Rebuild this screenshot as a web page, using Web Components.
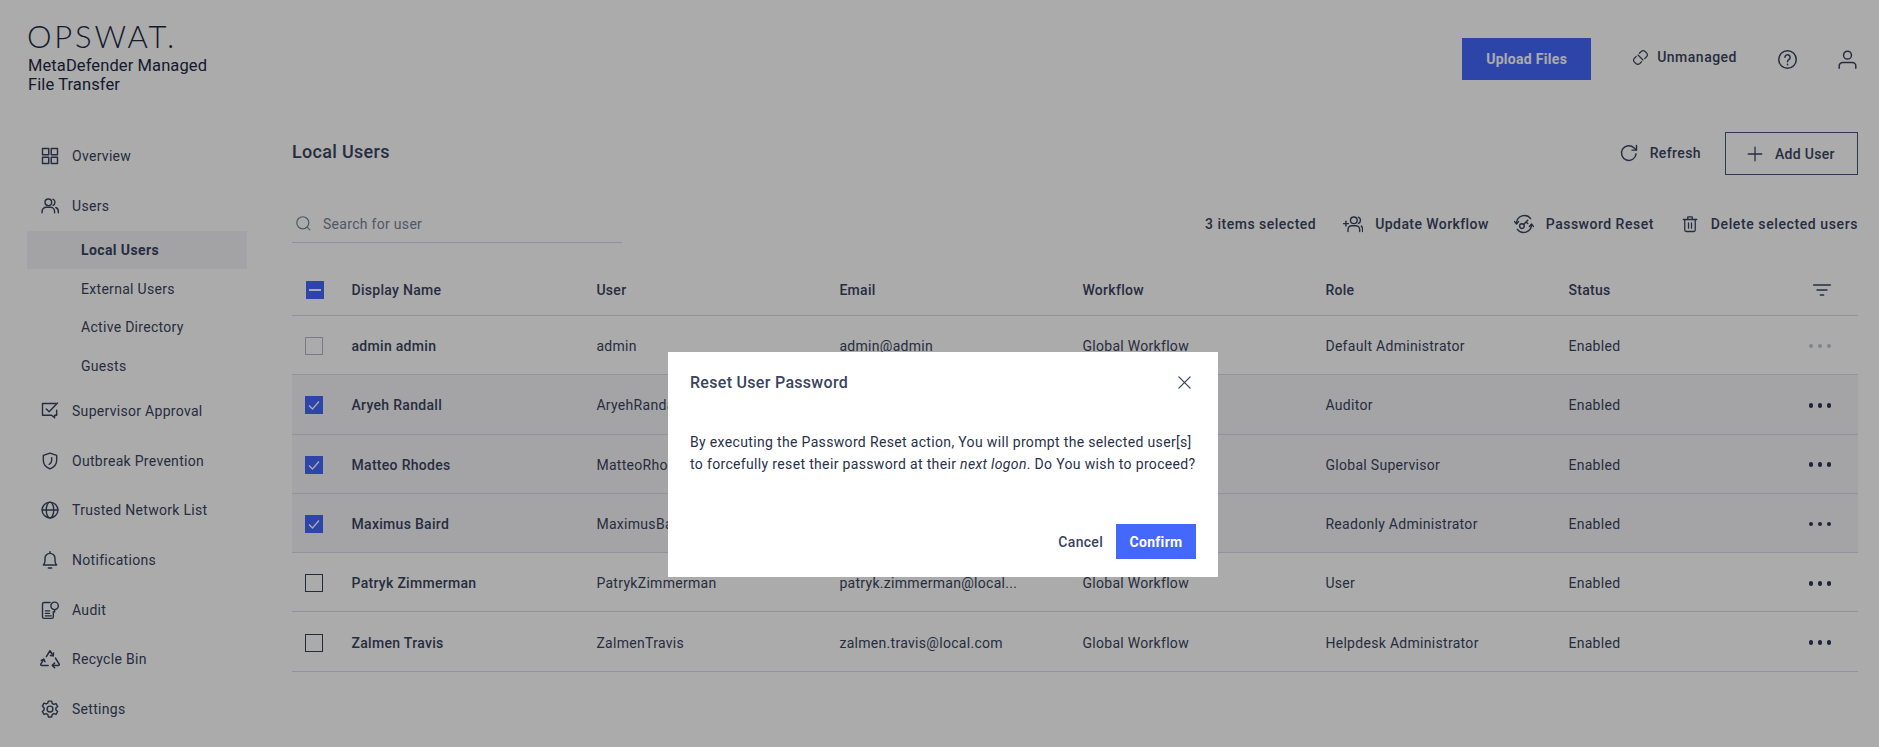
<!DOCTYPE html>
<html>
<head>
<meta charset="utf-8">
<title>Local Users</title>
<style>
  html, body { margin: 0; height: 100%; }
  body {
    background: #fff;
    color: #3a4460;
    font-family: Roboto, "Liberation Sans", sans-serif;
    font-size: 14px;
    letter-spacing: 0.3px;
    overflow: hidden;
  }
</style>
</head>
<body>
<mft-app></mft-app>
<script>
/**
 * Icons, all on a 24 unit grid
 *
 **/

const ICONS = {
  grid: '<rect x="3" y="3" width="7.5" height="7.5"/><rect x="13.5" y="3" width="7.5" height="7.5"/><rect x="3" y="13.5" width="7.5" height="7.5"/><rect x="13.5" y="13.5" width="7.5" height="7.5"/>',
  users: '<circle cx="10" cy="7.5" r="4"/><path d="M2.5 20v-1.5a5 5 0 0 1 5-5h5a5 5 0 0 1 5 5V20"/><path d="M15.5 3.8a4 4 0 0 1 0 7.4"/><path d="M19 13.8a5 5 0 0 1 3 4.7V20"/>',
  approval: '<path d="M19 3H3v14h11l3.5 3v-3H20v-6"/><path d="M7.5 9.5l3.5 3.5L21 2.5"/>',
  shield: '<path d="M12 2.5l8 2.8v6.2c0 4.8-3.4 8.2-8 10-4.6-1.8-8-5.2-8-10V5.3z"/><path d="M14 8v3.5c0 2-1 3.5-3 4.5"/>',
  globe: '<circle cx="12" cy="12" r="9.5"/><path d="M2.5 12h19"/><ellipse cx="12" cy="12" rx="4.5" ry="9.5"/>',
  bell: '<path d="M4 18h16c-1.5-1.5-2-3-2-5v-3a6 6 0 0 0-12 0v3c0 2-.5 3.5-2 5z"/><path d="M10 21.5h4"/><path d="M12 2v2"/>',
  audit: '<path d="M12 3H5a2 2 0 0 0-2 2v15a2 2 0 0 0 2 2h9a2 2 0 0 0 2-2v-6"/><circle cx="17.5" cy="7" r="4.5"/><path d="M17.5 11.5v3"/><path d="M6.5 13h5M6.5 16h5M6.5 19h7"/>',
  recycle: '<path d="M8 9.5L12 3l3.5 5.5"/><path d="M15.8 5.5l-.3 3-3-.3"/><path d="M18 11l4 6.5c.3.8-.2 1.5-1 1.5h-6"/><path d="M17 16.5L14.5 19l2.5 2.5"/><path d="M10 19H3c-.8 0-1.3-.7-1-1.5l3-5"/><path d="M2.5 13.5l2.7-1.3 1.3 2.8"/>',
  gear: '<circle cx="12" cy="12" r="3.5"/><path d="M10 2.5h4l.6 2.8 1.9 1.1 2.7-.9 2 3.5-2.1 1.9v2.2l2.1 1.9-2 3.5-2.7-.9-1.9 1.1-.6 2.8h-4l-.6-2.8-1.9-1.1-2.7.9-2-3.5 2.1-1.900v-2.200L2.800 8.500l2-3.500 2.700.9 1.900-1.100z"/>',
  unlink: '<path d="M10.500 6l2.500-2.500a4 4 0 0 1 5.500 0l2 2a4 4 0 0 1 0 5.500L18 13.500"/><path d="M13.500 18L11 20.500a4 4 0 0 1-5.500 0l-2-2a4 4 0 0 1 0-5.500L6 10.500"/><path d="M8.500 8.500l7 7"/>',
  help: '<circle cx="12" cy="12" r="10"/><path d="M9 9.500a3 3 0 1 1 4.600 2.500c-1 .7-1.600 1.300-1.600 2.500"/><path d="M12 17.300v.7"/>',
  user: '<circle cx="12" cy="7" r="4.500"/><path d="M2.500 22v-2.500a4 4 0 0 1 4-4h11a4 4 0 0 1 4 4V22"/>',
  refresh: '<path d="M20.500 13a8.800 8.800 0 1 1-2.600-7.200L21 8.500"/><path d="M21 3v5.500h-5.500"/>',
  plus: '<path d="M12 3v18M3 12h18"/>',
  search: '<circle cx="11" cy="11" r="8.500"/><path d="M17.500 17.500L21 21"/>',
  workflow: '<circle cx="13" cy="7.500" r="4"/><path d="M6 21v-2.500a4.500 4.500 0 0 1 4.500-4.500h5a4.500 4.500 0 0 1 4.500 4.500V21"/><path d="M18.500 3.800a4 4 0 0 1 0 7.400"/><path d="M22 14.500c1 .8 1.500 2 1.500 3.500v3"/><path d="M.5 11.500h6M3.500 8.500v6"/>',
  reset: '<path d="M3 11a9.500 9.500 0 0 1 17-5.500"/><path d="M21 13a9.500 9.500 0 0 1-17 5.500"/><path d="M.5 9l2.500 3 2.500-3"/><path d="M18.500 15l2.500-3 2.500 3"/><circle cx="9.500" cy="14.500" r="2.800"/><path d="M11.500 12.500l5-5M14.500 9.500l2 2"/>',
  trash: '<path d="M3 6h18"/><path d="M9 6V2.500h6V6"/><path d="M5 6v14a2 2 0 0 0 2 2h10a2 2 0 0 0 2-2V6"/><path d="M10 10.500v7M14 10.500v7"/>',
  filter: '<path d="M2 6h20M6 12h12M10 18h4"/>',
  close: '<path d="M3 3l18 18M21 3L3 21"/>',
};

class UiIcon extends HTMLElement {
  connectedCallback() {
    const size = this.getAttribute("size") || 20;
    const weight = this.getAttribute("weight") || 1.7;
    this.attachShadow({ mode: "open" }).innerHTML = `
      <style>
        :host { display: inline-flex; flex: none; }
        svg { display: block; fill: none; stroke: currentColor; stroke-linecap: round; stroke-linejoin: round; }
      </style>
      <svg width="${size}" height="${size}" viewBox="0 0 24 24" stroke-width="${weight}">
        ${ICONS[this.getAttribute("name")] || ""}
      </svg>
    `;
  }
}
customElements.define("ui-icon", UiIcon);

/**
 * Sidebar
 *
 **/

class NavItem extends HTMLElement {
  connectedCallback() {
    const name = this.getAttribute("icon");
    this.attachShadow({ mode: "open" }).innerHTML = `
      <style>
        :host {
          display: flex; align-items: center; gap: 12px; box-sizing: border-box;
          height: var(--nav-h, 50px); padding: var(--nav-top, 0) 0 0 13px;
        }
        ui-icon[name="recycle"] { margin: 0 -1px; }
      </style>
      <ui-icon name="${name}" size="${name === "recycle" ? 22 : 20}"></ui-icon>
      <slot></slot>
    `;
  }
}
customElements.define("nav-item", NavItem);

class NavSub extends HTMLElement {
  constructor() {
    super();
    this.attachShadow({ mode: "open" }).innerHTML = `
      <style>
        :host { display: flex; align-items: center; height: 38.5px; padding-left: 54px; }
        :host([active]) { background: #f3f3f6; font-weight: 700; letter-spacing: .4px; height: 38px; margin-bottom: .5px; }
      </style>
      <slot></slot>
    `;
  }
}
customElements.define("nav-sub", NavSub);

class AppSidebar extends HTMLElement {
  constructor() {
    super();
    this.attachShadow({ mode: "open" }).innerHTML = `
      <style>
        :host { display: block; padding-left: 27px; width: 220px; --nav-h: 50px; }
        .logo { height: 131px; box-sizing: border-box; padding: 19px 0 0 0; color: #1d2a44; }
        .mark { font: 300 31px/34px Lato, Roboto, sans-serif; letter-spacing: 2.8px; }
        .name { font: 400 16.5px/19px Roboto, sans-serif; letter-spacing: .1px; margin: 3px 0 0 1px; white-space: nowrap; }
        .rest { --nav-h: 49.7px; --nav-top: 2px; }
      </style>
      <div class="logo">
        <div class="mark">OPSWAT.</div>
        <div class="name">MetaDefender Managed<br>File Transfer</div>
      </div>
      <nav-item icon="grid">Overview</nav-item>
      <nav-item icon="users">Users</nav-item>
      <nav-sub active>Local Users</nav-sub>
      <nav-sub>External Users</nav-sub>
      <nav-sub>Active Directory</nav-sub>
      <nav-sub>Guests</nav-sub>
      <div class="rest">
        <nav-item icon="approval">Supervisor Approval</nav-item>
        <nav-item icon="shield">Outbreak Prevention</nav-item>
        <nav-item icon="globe">Trusted Network List</nav-item>
        <nav-item icon="bell">Notifications</nav-item>
        <nav-item icon="audit">Audit</nav-item>
        <nav-item icon="recycle">Recycle Bin</nav-item>
        <nav-item icon="gear">Settings</nav-item>
      </div>
    `;
  }
}
customElements.define("app-sidebar", AppSidebar);

/**
 * Buttons and action links
 *
 **/

class ActionLink extends HTMLElement {
  connectedCallback() {
    this.attachShadow({ mode: "open" }).innerHTML = `
      <style>
        :host { display: inline-flex; align-items: center; gap: var(--action-gap, 11px); font-weight: 500; white-space: nowrap; }
      </style>
      <ui-icon name="${this.getAttribute("icon")}" size="${this.getAttribute("size") || 20}"></ui-icon>
      <slot></slot>
    `;
  }
}
customElements.define("action-link", ActionLink);

class AppTopbar extends HTMLElement {
  constructor() {
    super();
    this.attachShadow({ mode: "open" }).innerHTML = `
      <style>
        :host { display: flex; align-items: center; justify-content: flex-end; height: 42px; }
        .upload {
          display: flex; align-items: center; justify-content: center;
          width: 129px; height: 42px; background: #4468fb; color: #fff; font-weight: 700;
          margin-right: 41px;
        }
        action-link { --action-gap: 8px; margin-right: 40px; margin-top: -4px; letter-spacing: .5px; }
        .help { margin-right: 39px; }
      </style>
      <div class="upload">Upload Files</div>
      <action-link icon="unlink" size="17">Unmanaged</action-link>
      <ui-icon class="help" name="help" size="21"></ui-icon>
      <ui-icon name="user" size="21"></ui-icon>
    `;
  }
}
customElements.define("app-topbar", AppTopbar);

class PageHead extends HTMLElement {
  constructor() {
    super();
    this.attachShadow({ mode: "open" }).innerHTML = `
      <style>
        :host { display: flex; align-items: center; height: 43px; margin-top: 52px; }
        h1 { font-size: 18px; font-weight: 500; margin: 0 auto 4px 0; }
        action-link { margin-bottom: 2px; letter-spacing: .4px; }
        .add {
          display: flex; align-items: center; gap: 11px; padding-left: 20px;
          box-sizing: border-box; width: 133px; height: 43px; margin-left: 24px;
          border: 1px solid #4a5678; font-weight: 500;
        }
      </style>
      <h1>Local Users</h1>
      <action-link icon="refresh">Refresh</action-link>
      <div class="add"><ui-icon name="plus" size="18"></ui-icon>Add User</div>
    `;
  }
}
customElements.define("page-head", PageHead);

class UserToolbar extends HTMLElement {
  constructor() {
    super();
    this.attachShadow({ mode: "open" }).innerHTML = `
      <style>
        :host { display: flex; align-items: flex-start; height: 40px; margin-top: 28px; }
        .search {
          display: flex; align-items: center; gap: 11px; box-sizing: border-box;
          width: 330px; height: 40px; padding: 2px 0 0 3px;
          border-bottom: 1px solid #d6d8e8; color: #79819b;
        }
        .actions { display: flex; align-items: center; height: 40px; padding-top: 2px; box-sizing: border-box; margin-left: auto; --action-gap: 12px; }
        .count { font-weight: 500; letter-spacing: .5px; margin-right: 27px; }
        action-link { margin-left: 27px; }
        .count + action-link { margin-left: 0; }
      </style>
      <div class="search"><ui-icon name="search" size="17"></ui-icon>Search for user</div>
      <div class="actions">
        <span class="count">3 items selected</span>
        <action-link icon="workflow" style="letter-spacing:.42px">Update Workflow</action-link>
        <action-link icon="reset" style="letter-spacing:.5px;margin-left:25px">Password Reset</action-link>
        <action-link icon="trash" size="18" style="letter-spacing:.6px">Delete selected users</action-link>
      </div>
    `;
  }
}
customElements.define("user-toolbar", UserToolbar);

/**
 * Table
 *
 **/

class CheckBox extends HTMLElement {
  connectedCallback() {
    const state = this.getAttribute("state");
    const mark = state === "on"
      ? '<svg width="18" height="18" viewBox="0 0 18 18"><path d="M4 9.5l3.5 3.5L14 5.5" fill="none" stroke="#fff" stroke-width="1.3"/></svg>'
      : state === "some"
        ? '<svg width="18" height="18" viewBox="0 0 18 18"><path d="M3 9h12" stroke="#fff" stroke-width="2"/></svg>'
        : "";
    this.attachShadow({ mode: "open" }).innerHTML = `
      <style>
        :host { display: block; box-sizing: border-box; width: 18px; height: 18px; border: 1px solid #374162; }
        :host([state="on"]), :host([state="some"]) { background: #4468fb; border: 0; }
        :host([state="some"]) { margin-left: 1px; }
        :host([faded]) { border-color: #b6b9c6; }
        svg { display: block; }
      </style>
      ${mark}
    `;
  }
}
customElements.define("check-box", CheckBox);

class UserRow extends HTMLElement {
  connectedCallback() {
    const get = (name) => this.getAttribute(name) || "";
    const selected = this.hasAttribute("selected");
    const dim = this.hasAttribute("dim");
    this.attachShadow({ mode: "open" }).innerHTML = `
      <style>
        :host {
          display: grid; grid-template-columns: var(--table-cols); align-items: center;
          height: var(--row-h, 59.3px); box-sizing: border-box; padding-top: 2px;
          border-bottom: 1px solid #d9dae6;
        }
        :host([selected]) { background: #f5f5f8; }
        .cell { white-space: nowrap; }
        .name { font-weight: 500; }
        .check { padding-left: 13px; }
        .last { display: flex; align-items: center; justify-content: space-between; padding-right: 27px; }
        .dots { display: flex; gap: 4.5px; }
        .dots i { width: 4.500px; height: 4.500px; border-radius: 50%; background: #2a3558; }
        :host([dim]) .dots i { background: #c3c6d2; }
      </style>
      <div class="check"><check-box ${selected ? 'state="on"' : ""} ${dim ? "faded" : ""}></check-box></div>
      <div class="cell name">${get("display")}</div>
      <div class="cell">${get("user")}</div>
      <div class="cell">${get("email")}</div>
      <div class="cell">${get("workflow")}</div>
      <div class="cell">${get("role")}</div>
      <div class="cell last">Enabled<span class="dots"><i></i><i></i><i></i></span></div>
    `;
  }
}
customElements.define("user-row", UserRow);

class TableHead extends HTMLElement {
  constructor() {
    super();
    this.attachShadow({ mode: "open" }).innerHTML = `
      <style>
        :host {
          display: grid; grid-template-columns: var(--table-cols); align-items: center;
          height: 50px; box-sizing: border-box; padding-bottom: 2px;
          border-bottom: 1px solid #d9dae6; font-weight: 500;
        }
        .check { padding-left: 13px; }
        .last { display: flex; align-items: center; justify-content: space-between; padding-right: 26px; }
      </style>
      <div class="check"><check-box state="some"></check-box></div>
      <div>Display Name</div><div>User</div><div>Email</div><div>Workflow</div><div>Role</div>
      <div class="last">Status<ui-icon name="filter" size="20"></ui-icon></div>
    `;
  }
}
customElements.define("table-head", TableHead);

class UserTable extends HTMLElement {
  constructor() {
    super();
    this.attachShadow({ mode: "open" }).innerHTML = `
      <style>
        :host { display: block; margin-top: 23px; --table-cols: 59.5px 244.9px 243px 243px 243px 243px 1fr; }
      </style>
      <table-head></table-head>
      <slot></slot>
    `;
  }
}
customElements.define("user-table", UserTable);

/**
 * Reset password dialog, sits over the dimmed page
 *
 **/

class ResetDialog extends HTMLElement {
  constructor() {
    super();
    this.attachShadow({ mode: "open" }).innerHTML = `
      <style>
        :host {
          position: absolute; left: 668px; top: 352px; z-index: 2;
          display: flex; flex-direction: column; box-sizing: border-box;
          width: 550px; height: 225px; padding: 19px 22px 18px 22px;
          background: #fff; color: #3a4460;
        }
        .head { display: flex; align-items: center; justify-content: space-between; height: 22px; padding-right: 4px; }
        h2 { font-size: 16px; font-weight: 500; margin: 0; }
        p { margin: 38px 0 0; line-height: 22px; letter-spacing: .34px; color: #2a3148; white-space: nowrap; }
        .foot { display: flex; align-items: center; justify-content: flex-end; gap: 13px; margin-top: auto; }
        .cancel { font-weight: 500; }
        .confirm {
          display: flex; align-items: center; justify-content: center;
          width: 80px; height: 35px; background: #4468fb; color: #fff; font-weight: 700;
        }
      </style>
      <div class="head">
        <h2>Reset User Password</h2>
        <ui-icon name="close" size="15" weight="2"></ui-icon>
      </div>
      <p>By executing the Password Reset action, You will prompt the selected user[s]<br>to forcefully reset their password at their <em>next logon</em>. Do You wish to proceed?</p>
      <div class="foot">
        <span class="cancel">Cancel</span>
        <div class="confirm">Confirm</div>
      </div>
    `;
  }
}
customElements.define("reset-dialog", ResetDialog);

/**
 * Page
 *
 **/

class MftApp extends HTMLElement {
  constructor() {
    super();
    this.attachShadow({ mode: "open" }).innerHTML = `
      <style>
        :host { display: grid; grid-template-columns: 292px 1fr; height: 747px; position: relative; }
        main { padding: 38px 21px 0 0; min-width: 0; }
        .shade { position: absolute; inset: 0; background: rgba(0, 0, 0, .33); z-index: 1; }
      </style>
      <app-sidebar></app-sidebar>
      <main>
        <app-topbar></app-topbar>
        <page-head></page-head>
        <user-toolbar></user-toolbar>
        <user-table>
          <user-row display="admin admin" user="admin" email="admin@admin" workflow="Global Workflow" role="Default Administrator" dim></user-row>
          <user-row display="Aryeh Randall" user="AryehRandall" role="Auditor" selected></user-row>
          <user-row display="Matteo Rhodes" user="MatteoRhodes" role="Global Supervisor" selected></user-row>
          <user-row display="Maximus Baird" user="MaximusBaird" role="Readonly Administrator" selected></user-row>
          <user-row display="Patryk Zimmerman" user="PatrykZimmerman" email="patryk.zimmerman@local..." workflow="Global Workflow" role="User"></user-row>
          <user-row display="Zalmen Travis" user="ZalmenTravis" email="zalmen.travis@local.com" workflow="Global Workflow" role="Helpdesk Administrator"></user-row>
        </user-table>
      </main>
      <div class="shade"></div>
      <reset-dialog></reset-dialog>
    `;
  }
}
customElements.define("mft-app", MftApp);
</script>
</body>
</html>
